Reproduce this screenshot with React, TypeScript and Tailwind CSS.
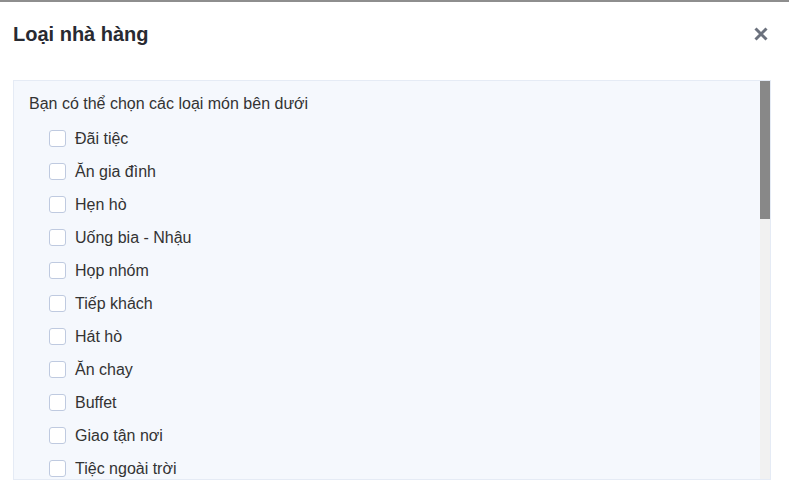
import React from "react";

const items = [
  "Đãi tiệc",
  "Ăn gia đình",
  "Hẹn hò",
  "Uống bia - Nhậu",
  "Họp nhóm",
  "Tiếp khách",
  "Hát hò",
  "Ăn chay",
  "Buffet",
  "Giao tận nơi",
  "Tiệc ngoài trời",
];

export default function App() {
  return (
    <div
      className="w-[789px] h-[489px] bg-white border-t-[2px] border-[#8e8e8e] overflow-hidden flex flex-col"
      style={{ fontFamily: '"Liberation Sans", Arial, sans-serif' }}
    >
      <div className="flex items-center justify-between pl-[13px] pr-[21px] pt-[17px] h-[46px]">
        <h2 className="text-[20px] leading-[28px] font-bold text-[#282a31]">Loại nhà hàng</h2>
        <svg width="14" height="14" viewBox="0 0 14 14">
          <path d="M1.5 1.5 L12.5 12.5 M12.5 1.5 L1.5 12.5" stroke="#6b717d" strokeWidth="3" strokeLinecap="butt" />
        </svg>
      </div>
      <div className="mt-[32px] ml-[13px] w-[758px] h-[400px] border border-[#e5ebf5] bg-[#f5f8fd] flex">
        <div className="flex-1 overflow-hidden pl-[15px] pt-[11px]">
          <div className="text-[16px] leading-[24px] text-[#333]">Bạn có thể chọn các loại món bên dưới</div>
          <div className="mt-[6px] pl-[20px] flex flex-col">
            {items.map((t) => (
              <label key={t} className="h-[33px] flex items-center gap-[9px] text-[16px] text-[#333]">
                <span className="w-[17px] h-[17px] rounded-[3px] border border-[#bfcae0] bg-white shrink-0" />
                <span>{t}</span>
              </label>
            ))}
          </div>
        </div>
        <div className="w-[10px] bg-[#f1f1f1] flex flex-col">
          <div className="h-[138px] bg-[#888888]" />
        </div>
      </div>
    </div>
  );
}
